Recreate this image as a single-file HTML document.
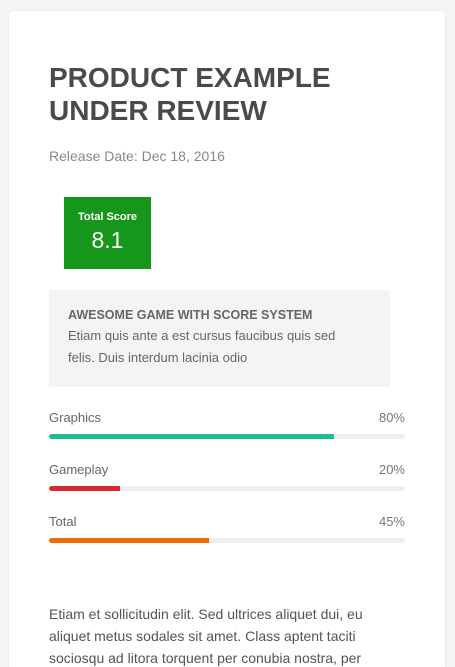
<!DOCTYPE html>
<html><head><meta charset="utf-8"><style>
html,body{margin:0;padding:0;width:455px;height:667px;overflow:hidden;}
body{background:#f4f4f4;position:relative;font-family:"Liberation Sans",sans-serif;}
.card{position:absolute;left:9px;top:11px;width:436px;height:656px;background:#fff;border-radius:4px 4px 0 0;box-shadow:0 0 2px rgba(0,0,0,0.08);}
.a{position:absolute;white-space:nowrap;}
h1{position:absolute;left:49px;top:61px;margin:0;font-size:28px;line-height:33px;font-weight:bold;color:#4a4a4a;}
.rd{left:49px;top:148px;font-size:14px;color:#888;}
.score{position:absolute;left:64px;top:197px;width:87px;height:72px;background:#16961a;color:#fff;text-align:center;}
.score .t{font-size:11px;font-weight:bold;margin-top:14px;line-height:13px;}
.score .n{font-size:23px;line-height:28px;margin-top:2px;}
.box{position:absolute;left:49px;top:290px;width:341px;height:97px;background:#f4f4f4;}
.box .h{position:absolute;left:19px;top:18px;font-size:12.5px;font-weight:bold;color:#666;}
.box .p{position:absolute;left:19px;top:35px;font-size:13px;line-height:22px;color:#666;width:300px;}
.lbl{left:49px;font-size:13px;color:#666;}
.pct{right:50px;font-size:13px;color:#777;}
.bar{position:absolute;left:49px;width:356px;height:5px;background:#eee;border-radius:3px;overflow:hidden;}
.bar div{height:5px;border-radius:3px 0 0 3px;}
.para{position:absolute;left:49px;top:603px;width:360px;height:64px;overflow:hidden;font-size:14px;line-height:22px;color:#555;}
</style></head><body>
<div class="card"></div>
<h1>PRODUCT EXAMPLE<br>UNDER REVIEW</h1>
<div class="a rd">Release Date: Dec 18, 2016</div>
<div class="score"><div class="t">Total Score</div><div class="n">8.1</div></div>
<div class="box"><div class="a h">AWESOME GAME WITH SCORE SYSTEM</div><div class="p">Etiam quis ante a est cursus faucibus quis sed<br>felis. Duis interdum lacinia odio</div></div>
<div class="a lbl" style="top:410px">Graphics</div><div class="a pct" style="top:410px">80%</div>
<div class="bar" style="top:434px"><div style="width:285px;background:#1abc9c"></div></div>
<div class="a lbl" style="top:462px">Gameplay</div><div class="a pct" style="top:462px">20%</div>
<div class="bar" style="top:486px"><div style="width:71px;background:#d9282e"></div></div>
<div class="a lbl" style="top:514px">Total</div><div class="a pct" style="top:514px">45%</div>
<div class="bar" style="top:538px"><div style="width:160px;background:#ee6a00"></div></div>
<div class="para">Etiam et sollicitudin elit. Sed ultrices aliquet dui, eu<br>aliquet metus sodales sit amet. Class aptent taciti<br>sociosqu ad litora torquent per conubia nostra, per</div>
</body></html>
